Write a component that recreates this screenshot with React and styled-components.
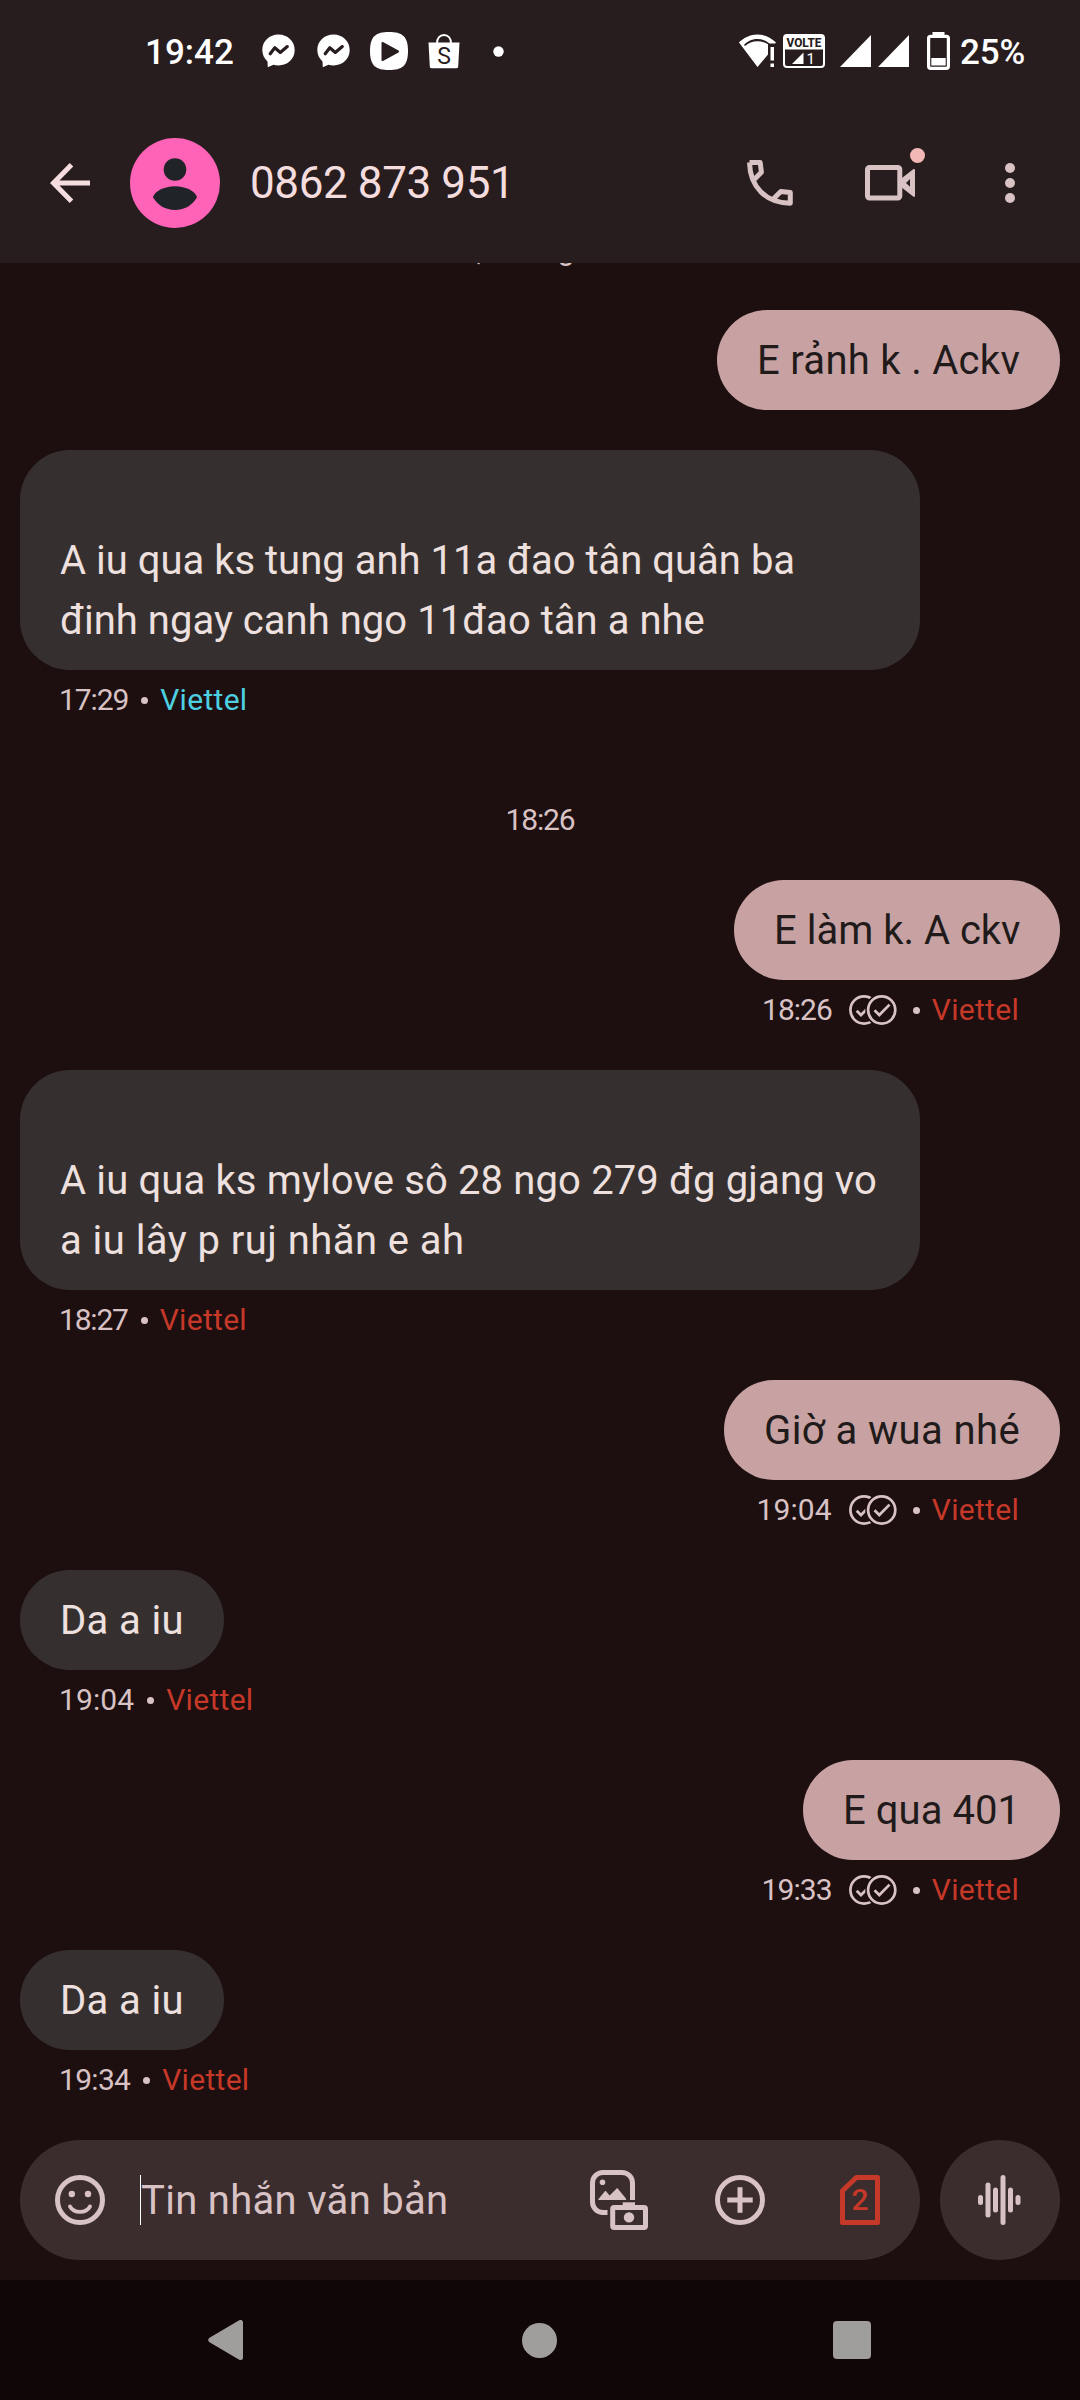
import React from 'react';
import styled, { createGlobalStyle } from 'styled-components';

const color = {
  bg: '#1d0f10',
  bar: '#281d1e',
  incoming: '#362f2f',
  outgoing: '#c8a2a2',
  field: '#3b2d2e',
  nav: '#100607',
  text: '#ede0df',
  title: '#f5dddf',
  muted: '#d8c2c4',
  red: '#c63828',
  cyan: '#4dd0e1',
  navIcon: '#a09e9c',
};

const Global = createGlobalStyle`
  * { box-sizing: border-box; }
  body { margin: 0; background: ${color.bg}; }
  svg { display: block; flex: none; }
`;

const Screen = styled.main`
  display: flex;
  flex-direction: column;
  width: 1080px;
  height: 2400px;
  overflow: hidden;
  background: ${color.bg};
  font-family: Roboto, 'Open Sans', sans-serif;
`;

const Top = styled.header`
  flex: none;
  height: 263px;
  background: ${color.bar};
`;

const StatusBar = styled.div`
  display: flex;
  align-items: center;
  justify-content: space-between;
  height: 102px;
  padding: 0 55px 0 145px;
  color: #fff;
`;

const StatusGroup = styled.div`
  display: flex;
  align-items: center;
`;

const StatusText = styled.span`
  display: block;
  font-size: 35px;
  line-height: 40px;
  font-weight: 500;
  padding-top: 4px;
  letter-spacing: ${(p) => p.$track || 0}px;
`;

const Slot = styled.span`
  display: block;
  flex: none;
  margin-left: ${(p) => p.$gap}px;
`;

const AppBar = styled.div`
  display: flex;
  align-items: center;
  height: 161px;
  padding: 0 65px 0 50px;
`;

const Avatar = styled.div`
  flex: none;
  width: 90px;
  height: 90px;
  margin-left: 40px;
  border-radius: 50%;
  background: #ff63b8;
`;

const Title = styled.h1`
  flex: 1;
  margin: 0 0 0 30px;
  font-size: 44px;
  line-height: 60px;
  font-weight: 400;
  letter-spacing: -0.4px;
  color: ${color.title};
`;

const Actions = styled.div`
  display: flex;
  align-items: center;
`;

const VideoWrap = styled.div`
  position: relative;
  margin: 0 90px 0 72px;
`;

const Badge = styled.span`
  position: absolute;
  top: -17px;
  right: -10px;
  width: 15px;
  height: 15px;
  border-radius: 50%;
  background: #f2b8b5;
`;

const Thread = styled.section`
  flex: none;
  display: flex;
  flex-direction: column;
  gap: 40px;
  height: 1877px;
  overflow: hidden;
`;

const DateLine = styled.time`
  flex: none;
  height: 40px;
  margin-top: ${(p) => p.$top}px;
  text-align: center;
  font-size: 30px;
  line-height: 40px;
  letter-spacing: ${(p) => p.$track || 0}px;
  color: ${color.muted};
`;

const Message = styled.article`
  flex: none;
  display: flex;
  flex-direction: column;
  align-items: ${(p) => (p.$out ? 'flex-end' : 'flex-start')};
  padding: 0 20px;
`;

const Bubble = styled.div`
  width: ${(p) => (p.$w ? `${p.$w}px` : 'auto')};
  padding: 21px 0 19px 40px;
  border-radius: 50px;
  background: ${(p) => (p.$out ? color.outgoing : color.incoming)};
  color: ${(p) => (p.$out ? '#211a1a' : color.text)};
  font-size: 40px;
  line-height: 60px;
`;

const Line = styled.div`
  min-height: 60px;
  white-space: pre;
  letter-spacing: ${(p) => p.$track || 0}px;
`;

const Meta = styled.div`
  display: flex;
  align-items: center;
  height: 40px;
  margin-top: 10px;
  padding: ${(p) => (p.$out ? '0 41px 0 0' : '0 0 0 39px')};
  font-size: 30px;
  line-height: 40px;
  color: ${color.muted};
`;

const Time = styled.time`
  letter-spacing: ${(p) => p.$track}px;
`;

const Checks = styled.span`
  margin: 0 0 0 17px;
`;

const Dot = styled.span`
  width: 7px;
  height: 7px;
  margin: ${(p) => (p.$out ? '1px 12px 0 16px' : '1px 12px 0 13px')};
  border-radius: 50%;
  background: ${color.muted};
`;

const Sim = styled.span`
  letter-spacing: 0.3px;
  color: ${(p) => (p.$cyan ? color.cyan : color.red)};
`;

const Composer = styled.footer`
  flex: none;
  display: flex;
  gap: 20px;
  height: 140px;
  padding: 0 20px 20px;
`;

const Field = styled.div`
  display: flex;
  align-items: center;
  width: 900px;
  height: 120px;
  padding: 0 40px 0 35px;
  border-radius: 60px;
  background: ${color.field};
`;

const Caret = styled.span`
  width: 1px;
  height: 50px;
  margin-left: 35px;
  background: #fff;
`;

const Placeholder = styled.span`
  flex: 1;
  padding-top: 1px;
  font-size: 40px;
  line-height: 60px;
  letter-spacing: 0.3px;
  color: ${color.muted};
`;

const Tools = styled.div`
  display: flex;
  align-items: center;
`;

const Voice = styled.button`
  display: flex;
  align-items: center;
  justify-content: center;
  width: 120px;
  height: 120px;
  padding: 0 2px 0 0;
  border: 0;
  border-radius: 50%;
  background: ${color.field};
`;

const NavBar = styled.nav`
  flex: none;
  display: flex;
  align-items: center;
  justify-content: space-between;
  height: 120px;
  padding: 0 209px 0 208px;
  background: ${color.nav};
`;

const Messenger = () => (
  <svg width="33" height="34" viewBox="0 0 33 34">
    <path fill="#fff" d="M16.5 0.5C7.4 0.5 0.3 7 0.3 16c0 4.700 2 8.600 5.200 11.400l.3 5.800 5.600-2.500c1.600.5 3.300.7 5.100.7 9.100 0 16.200-6.400 16.200-15.400S25.600.5 16.500.5z" />
    <path fill="none" stroke={color.bar} strokeWidth="3.200" strokeLinecap="round" strokeLinejoin="round" d="M8.200 19.800l4.600-6 5.500 4.600 7-5.800" />
  </svg>
);

const PlayApp = () => (
  <svg width="38" height="38" viewBox="0 0 38 38">
    <path fill="#fff" d="M19 0C32 0 38 4 38 19S32 38 19 38 0 34 0 19 6 0 19 0z" />
    <path fill={color.bar} stroke={color.bar} strokeWidth="2" strokeLinejoin="round" d="M12.500 11L28 19.500 12.500 28z" />
  </svg>
);

const Shop = () => (
  <svg width="32" height="35" viewBox="0 0 32 35">
    <path fill="none" stroke="#fff" strokeWidth="1.900" d="M9 9.500C9 4 12 1 16 1s7 3 7 8.500" />
    <path fill="#fff" d="M.5 8.500h31l-1.300 24c-.1 1.200-.6 1.700-1.700 1.700h-25c-1.100 0-1.600-.5-1.700-1.700z" />
    <text x="16" y="29.500" textAnchor="middle" fontFamily="Roboto, sans-serif" fontSize="23" fill={color.bar}>S</text>
  </svg>
);

const Wifi = () => (
  <svg width="37" height="34" viewBox="0 0 37 34">
    <path fill="#fff" d="M0 8.500C5 3.500 11 .5 18.500.5S32 3.500 37 8.500l-1 1H30.500C27 6.700 23 5 18.500 5 12.500 5 8 7.500 4.500 11.500z" />
    <path fill="#fff" d="M0 8.500l2-1.200L6 12c3.500-3 7.500-4.700 12.500-4.700 4 0 7.500 1.200 10.500 3V20.500L18.500 33z" />
    <path fill="#fff" d="M31.500 13H35v13.500h-3.500zM31.500 29.500H35V33h-3.500z" />
  </svg>
);

const Volte = () => (
  <svg width="42" height="34" viewBox="0 0 42 34">
    <rect x="1" y="1" width="40" height="32" rx="3" fill={color.bar} stroke="#fff" strokeWidth="2" />
    <rect x="1" y="1" width="40" height="14.500" rx="2" fill="#fff" />
    <text x="21" y="13.300" textAnchor="middle" fontFamily="Roboto, sans-serif" fontWeight="800" fontSize="13" textLength="35" lengthAdjust="spacingAndGlyphs" fill={color.bar}>VOLTE</text>
    <path fill="#fff" d="M9 30L20.500 18.500V30z" />
    <text x="23.500" y="30" fontFamily="Roboto, sans-serif" fontSize="15" fill="#fff">1</text>
  </svg>
);

const Signal = () => (
  <svg width="31" height="32" viewBox="0 0 31 32"><path fill="#fff" d="M0 32L31 0v32z" /></svg>
);

const Battery = () => (
  <svg width="23" height="38" viewBox="0 0 23 38">
    <path fill="#fff" d="M5.500 0h12v3h-12z" />
    <rect x="1.600" y="4.300" width="19.800" height="32" rx="2" fill="none" stroke="#fff" strokeWidth="3.200" />
    <path fill="#fff" d="M4.300 26h14.400v7.500H4.300z" />
  </svg>
);

const Back = () => (
  <svg width="40" height="40" viewBox="0 0 40 40">
    <path fill="none" stroke={color.title} strokeWidth="5" d="M21.500 1.800L3.500 20l18 18.200M4 20h36" />
  </svg>
);

const Person = () => (
  <svg width="90" height="90" viewBox="0 0 90 90">
    <circle cx="45" cy="31.500" r="11.300" fill="#202327" />
    <path fill="#202327" d="M23 59.300c1.500-6 11-11 22-11s20.500 5 22 11C62 67.500 55 72 45 72s-17-4.500-22-12.700z" />
  </svg>
);

const Phone = () => (
  <svg width="46" height="46" viewBox="0 0 46 46">
    <path fill="none" stroke={color.muted} strokeWidth="5" strokeLinejoin="round" d="M2.500 2.500C3 27 19 43 43.300 43.300V32.600l-9.500-1.200-6.800 6.800M2.500 2.500h10.700l1.200 9.800-6.700 6.700" />
  </svg>
);

const Video = () => (
  <svg width="50" height="36" viewBox="0 0 50 36">
    <rect x="2.500" y="2.500" width="32.300" height="30.500" rx="2" fill="none" stroke={color.muted} strokeWidth="5" />
    <path fill={color.muted} fillRule="evenodd" d="M36 13.800L48.200 4.300c.9-.6 1.800-.2 1.800.9v25.500c0 1.100-.9 1.500-1.800.9L36 22.100zM45 14l-4 3.900 4 3.900z" />
  </svg>
);

const More = () => (
  <svg width="10" height="40" viewBox="0 0 10 40" fill={color.muted}>
    <circle cx="5" cy="5" r="5" /><circle cx="5" cy="20" r="5" /><circle cx="5" cy="35" r="5" />
  </svg>
);

const Delivered = () => (
  <svg width="48" height="30" viewBox="0 0 48 30" fill="none" stroke={color.muted} strokeWidth="2.700">
    <circle cx="15" cy="15" r="13.600" />
    <path d="M7.700 15.700l4.300 4.300 7-7" />
    <circle cx="32.700" cy="15" r="15.200" fill={color.bg} stroke={color.bg} strokeWidth="2.600" />
    <circle cx="32.700" cy="15" r="13.600" />
    <path d="M25.500 15.200l4.800 4.800 10.200-10.400" />
  </svg>
);

const Smile = () => (
  <svg width="50" height="50" viewBox="0 0 50 50">
    <circle cx="25" cy="25" r="22.500" fill="none" stroke={color.muted} strokeWidth="5" />
    <circle cx="16.800" cy="19" r="3.200" fill={color.muted} />
    <circle cx="33" cy="19" r="3.200" fill={color.muted} />
    <path fill="none" stroke={color.muted} strokeWidth="3.800" strokeLinecap="round" d="M15 31.500c4 7.200 16 7.200 20 0" />
  </svg>
);

const Gallery = () => (
  <svg width="58" height="60" viewBox="0 0 58 60">
    <path fill="none" stroke={color.muted} strokeWidth="5" d="M42.500 30V13A10.500 10.500 0 0 0 32 2.500H13A10.500 10.500 0 0 0 2.500 13v19A10.500 10.500 0 0 0 13 42.500h4.500" />
    <circle cx="12.500" cy="12.300" r="2.800" fill={color.muted} />
    <path fill={color.muted} d="M8.500 29l6.200-7.600c.5-.6 1-.6 1.500 0l3.400 4.100 6.800-6.700c.5-.6 1-.6 1.500 0l8 9.600c.7.900.3 1.600-.7 1.600H9.300c-1 0-1.400-.2-.8-1z" />
    <path fill={color.muted} d="M32.700 32.300H45V37H32.700z" />
    <rect x="22.700" y="37.500" width="32.800" height="20" rx="1.500" fill="none" stroke={color.muted} strokeWidth="5" />
    <circle cx="39" cy="47.400" r="5.200" fill={color.muted} />
  </svg>
);

const Plus = () => (
  <svg width="50" height="50" viewBox="0 0 50 50" fill="none" stroke={color.muted} strokeWidth="5">
    <circle cx="25" cy="25" r="22.500" />
    <path d="M25 12.300v25.400M12.300 25h25.400" />
  </svg>
);

const SimCard = () => (
  <svg width="40" height="50" viewBox="0 0 40 50">
    <path fill="none" stroke={color.red} strokeWidth="5" strokeLinejoin="round" d="M16.300 2.500h21.200v45h-35V15.800z" />
    <text x="20" y="35" textAnchor="middle" fontFamily="Roboto, sans-serif" fontWeight="500" fontSize="30" fill={color.red}>2</text>
  </svg>
);

const bars = [[0, 10], [7.500, 35], [15, 25], [22.500, 50], [30, 25], [37.500, 10]];
const Wave = () => (
  <svg width="43" height="50" viewBox="0 0 43 50" fill={color.muted}>
    {bars.map(([x, h]) => <rect key={x} x={x} y={25 - h / 2} width="5" height={h} rx="2.500" />)}
  </svg>
);

const NavBack = () => (
  <svg width="35" height="40" viewBox="0 0 35 40">
    <path fill={color.navIcon} stroke={color.navIcon} strokeWidth="5" strokeLinejoin="round" d="M2.800 20L32.500 2.500v35z" />
  </svg>
);
const NavHome = () => (
  <svg width="37" height="37" viewBox="0 0 37 37"><circle cx="19.500" cy="18.500" r="17.500" fill={color.navIcon} /></svg>
);
const NavRecent = () => (
  <svg width="38" height="38" viewBox="0 0 38 38"><rect width="38" height="38" rx="4" fill={color.navIcon} /></svg>
);

const thread = [
  { date: 'Thứ Ba, 14 thg 3 • 17:28', top: -33, track: 0 },
  { out: true, w: 343, lines: [['E rảnh k . Ackv', 0.3]] },
  { w: 900, lines: [['', 0], ['A iu qua ks tung anh 11a đao tân quân ba', 0], ['đinh ngay canh ngo 11đao tân a nhe', 0.03]], time: '17:29', track: -1.1, cyan: true },
  { date: '18:26', top: 40, track: -1.1 },
  { out: true, w: 326, lines: [['E làm k. A ckv', 0]], time: '18:26', track: -1 },
  { w: 900, lines: [['', 0], ['A iu qua ks mylove sô 28 ngo 279 đg gjang vo', 0.14], ['a iu lây p ruj nhăn e ah', 0.45]], time: '18:27', track: -1.2 },
  { out: true, w: 336, lines: [['Giờ a wua nhé', 0.42]], time: '19:04', track: 0.1 },
  { w: 204, lines: [['Da a iu', 0.37]], time: '19:04', track: 0.1 },
  { out: true, w: 257, lines: [['E qua 401', 0.05]], time: '19:33', track: -0.9 },
  { w: 204, lines: [['Da a iu', 0.37]], time: '19:34', track: -0.7 },
];

function ThreadItem({ item }) {
  if (item.date) return <DateLine $top={item.top} $track={item.track}>{item.date}</DateLine>;
  return (
    <Message $out={item.out}>
      <Bubble $out={item.out} $w={item.w}>
        {item.lines.map(([text, track], i) => <Line key={i} $track={track}>{text}</Line>)}
      </Bubble>
      {item.time && (
        <Meta $out={item.out}>
          <Time $track={item.track}>{item.time}</Time>
          {item.out && <Checks><Delivered /></Checks>}
          <Dot $out={item.out} />
          <Sim $cyan={item.cyan}>Viettel</Sim>
        </Meta>
      )}
    </Message>
  );
}

export default function App() {
  return (
    <Screen>
      <Global />
      <Top>
        <StatusBar>
          <StatusGroup>
            <StatusText>19:42</StatusText>
            <Slot $gap={28}><Messenger /></Slot>
            <Slot $gap={22}><Messenger /></Slot>
            <Slot $gap={20}><PlayApp /></Slot>
            <Slot $gap={20}><Shop /></Slot>
            <Slot $gap={33}>
              <svg width="11" height="11" viewBox="0 0 11 11"><circle cx="5.500" cy="5.500" r="5.200" fill="#fff" /></svg>
            </Slot>
          </StatusGroup>
          <StatusGroup>
            <Wifi />
            <Slot $gap={7}><Volte /></Slot>
            <Slot $gap={15}><Signal /></Slot>
            <Slot $gap={7}><Signal /></Slot>
            <Slot $gap={18}><Battery /></Slot>
            <Slot $gap={10}><StatusText $track={-0.2}>25%</StatusText></Slot>
          </StatusGroup>
        </StatusBar>
        <AppBar>
          <Back />
          <Avatar><Person /></Avatar>
          <Title>0862 873 951</Title>
          <Actions>
            <Phone />
            <VideoWrap><Video /><Badge /></VideoWrap>
            <More />
          </Actions>
        </AppBar>
      </Top>
      <Thread>
        {thread.map((item, i) => <ThreadItem key={i} item={item} />)}
      </Thread>
      <Composer>
        <Field>
          <Smile />
          <Caret />
          <Placeholder>Tin nhắn văn bản</Placeholder>
          <Tools>
            <Gallery />
            <Slot $gap={67}><Plus /></Slot>
            <Slot $gap={75}><SimCard /></Slot>
          </Tools>
        </Field>
        <Voice aria-label="Ghi âm"><Wave /></Voice>
      </Composer>
      <NavBar>
        <NavBack />
        <NavHome />
        <NavRecent />
      </NavBar>
    </Screen>
  );
}
